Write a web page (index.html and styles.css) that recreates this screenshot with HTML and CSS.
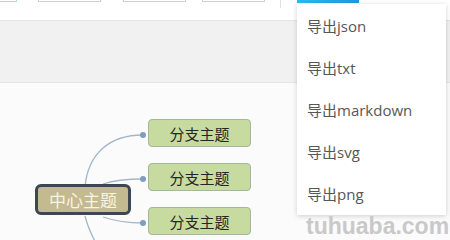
FILE: index.html
```html
<!DOCTYPE html>
<html>
<head>
<meta charset="utf-8">
<link rel="stylesheet" href="styles.css">
</head>
<body>
<div class="page">
  <div class="toolbar">
    <div class="box box1"></div>
    <div class="box box2"></div>
    <div class="box box3"></div>
    <div class="box box4"></div>
    <div class="sep"></div>
    <div class="tab"></div>
  </div>
  <div class="band"></div>
  <div class="canvas">
    <svg class="links" width="450" height="160" viewBox="0 80 450 160">
      <path d="M85 184 C88 150 110 132 143 132" />
      <path d="M103 181 C115 177 125 176 143 176" />
      <path d="M103 214 C115 218 125 220 143 220" />
      <path d="M85 213 C88 225 92 233 97 242" />
      <circle cx="143" cy="132" r="3" />
      <circle cx="143" cy="176" r="3" />
      <circle cx="143" cy="220" r="3" />
    </svg>
    <div class="node root">中心主题</div>
    <div class="node branch b1">分支主题</div>
    <div class="node branch b2">分支主题</div>
    <div class="node branch b3">分支主题</div>
  </div>
  <div class="menu">
    <div class="item">导出json</div>
    <div class="item">导出txt</div>
    <div class="item">导出markdown</div>
    <div class="item">导出svg</div>
    <div class="item">导出png</div>
  </div>
  <div class="watermark">tuhuaba.com</div>
</div>
</body>
</html>
```
FILE: styles.css
```css
html, body {
  margin: 0;
  padding: 0;
}
body {
  width: 450px;
  height: 240px;
  overflow: hidden;
  font-family: "Open Sans", "Noto Sans CJK SC", sans-serif;
}
.page {
  position: relative;
  width: 450px;
  height: 240px;
  overflow: hidden;
  display: flex;
  flex-direction: column;
}
.toolbar {
  height: 20px;
  background: #ffffff;
  border-bottom: 1px solid #e4e4e4;
  display: flex;
  align-items: flex-start;
  flex-shrink: 0;
}
.box {
  margin-top: -19px;
  border: 1px solid #d0d0d0;
  box-sizing: border-box;
  height: 21px;
}
.box1 {
  width: 17px;
  border-color: #a6d8ef;
  border-left: none;
}
.box2 { margin-left: 21px; width: 63px; }
.box3 { margin-left: 22px; width: 63px; }
.box4 { margin-left: 16px; width: 63px; }
.sep {
  margin-left: 15px;
  width: 1px;
  height: 8px;
  background: #e2e2e2;
}
.tab {
  margin-left: 16px;
  width: 62px;
  height: 3px;
  background: linear-gradient(90deg, #28c0e8, #1e98e0);
}
.band {
  height: 61px;
  background: #f1f1f1;
  border-bottom: 1px solid #e6e6e6;
  flex-shrink: 0;
}
.canvas {
  flex: 1;
  position: relative;
  background: #fbfbfc;
}
.links {
  position: absolute;
  left: 0;
  top: 0;
}
.links path {
  fill: none;
  stroke: #a3b7ca;
  stroke-width: 1.3;
}
.links circle {
  fill: #7e9ebd;
}
.node {
  position: absolute;
  box-sizing: border-box;
  display: flex;
  align-items: center;
  justify-content: center;
  font-family: "Noto Sans CJK SC", sans-serif;
}
.root {
  left: 35px;
  top: 101px;
  width: 96px;
  height: 31px;
  background: #c4ba90;
  border: 3px solid #3c4751;
  border-radius: 6px;
  color: #f7f3e6;
  font-size: 17px;
}
.branch {
  left: 148px;
  width: 103px;
  height: 28px;
  background: #c7da9f;
  border: 1px solid #a2b89c;
  border-radius: 4px;
  color: #262626;
  font-size: 15px;
}
.b1 { top: 36px; }
.b2 { top: 80px; }
.b3 { top: 124px; }
.menu {
  position: absolute;
  left: 297px;
  top: 4px;
  width: 149px;
  padding-top: 1px;
  background: #ffffff;
  box-shadow: 0 1px 5px rgba(0, 0, 0, 0.18);
}
.item {
  height: 42px;
  line-height: 42px;
  padding-left: 10px;
  font-size: 15px;
  color: #575757;
}
.watermark {
  position: absolute;
  left: 306px;
  top: 215px;
  font-family: "Liberation Sans", sans-serif;
  font-weight: bold;
  font-size: 23px;
  line-height: 23px;
  color: #c9c9c9;
}
```
